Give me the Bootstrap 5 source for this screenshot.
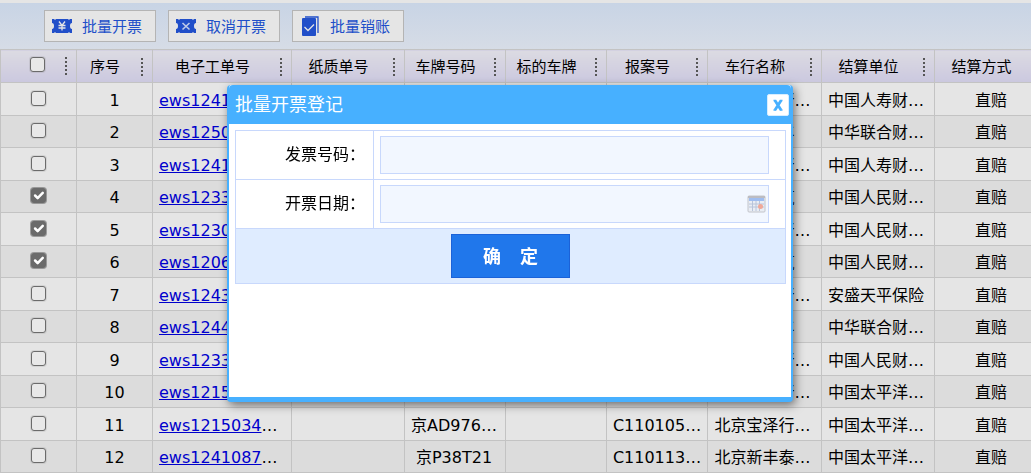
<!DOCTYPE html>
<html lang="zh-CN">
<head>
<meta charset="utf-8">
<meta name="viewport" content="width=device-width, initial-scale=1">
<title>批量开票登记</title>
<link href="https://cdn.jsdelivr.net/npm/bootstrap@5.3.0/dist/css/bootstrap.min.css" rel="stylesheet">
<style>
body { font-family: "DejaVu Sans", "Noto Sans CJK SC", sans-serif; font-size: 16px; color: #000; background: #e5e5e5; overflow: hidden; }
.toolbar { margin-top: 3px; height: 46px; padding: 7px 0 0 44px; gap: 12px; background: linear-gradient(#c8d4e5, #d6dce6); }
.tool-btn { width: 112px; height: 32px; padding: 0 0 0 7px; gap: 10px; font-size: 15px; line-height: 20px; color: #214fc9; background: #e5e5e5; border: 1px solid #b4b4b4; border-radius: 0; font-family: "Noto Sans CJK SC", sans-serif; }
.tool-btn svg { width: 20px; height: 20px; }
.grid { table-layout: fixed; width: 1048px; border-collapse: collapse; line-height: 20px; }
.grid th, .grid td { border: 1px solid #c3c3c3; padding: 0; text-align: center; white-space: nowrap; overflow: hidden; vertical-align: middle; }
.grid th { height: 33px; padding-top: 2px; font-size: 15px; font-weight: 400; background: linear-gradient(#dcdbe2, #cbc8df); }
.grid th:first-child { padding-top: 0; }
.grid td { height: 33px; padding-top: 3px; }
.grid tbody tr:nth-child(even) td { height: 32px; background: #dcdcdc; }
.grid td:nth-child(3) { text-align: left; padding-left: 6px; }
.grid td:nth-child(5) { padding-right: 2px; }
.grid td:nth-child(8), .grid td:nth-child(9) { padding-right: 4px; }
.grid td a { color: #00c; text-decoration: underline; }
.grip { width: 3px; height: 19px; margin-right: 9px; background: repeating-linear-gradient(#555 0 2px, transparent 2px 4px) center / 2px 18px no-repeat; }
.grip-room { width: 7px; }
.grid .form-check-input { width: 15px; height: 15px; margin: 0; border: 1px solid #6b6b6b; border-radius: 3px; background-color: #e8e8e8; vertical-align: middle; box-shadow: 0 0 0 1px rgba(107,107,107,.15); }
.grid td .form-check-input { margin-top: -6px; }
.grid th .form-check-input { margin-top: -4px; }
.grid .form-check-input:checked { background-color: #6b6b6b; border-color: #6b6b6b; background-size: 17px; background-position: center; box-shadow: 0 0 0 1px rgba(107,107,107,.6); }
.dialog-layer { padding: 85px 11px 0 0; overflow: hidden; }
.dialog-layer .modal-dialog { max-width: 566px; margin: 0 auto; }
.dialog-box { min-height: 317px; border: 2px solid #47b0ff; border-width: 0 2px 5px; border-radius: 4px; background: #fff; box-shadow: 2px 3px 10px rgba(0,0,0,.5); }
.dialog-head { height: 39px; padding: 1px 2px 0 6px; border: 0; background: #47b0ff; border-radius: 4px 4px 0 0; }
.dialog-head h1 { font-size: 18px; line-height: 24px; color: #fff; font-weight: 400; }
.x-btn { width: 22px; height: 22px; padding: 0; border: 1px solid #d6edff; border-radius: 2px; background: #fff; display: flex; }
.entry-wrap { padding: 6px 5px 0 6px; }
.entry { border-collapse: collapse; width: 100%; }
.entry th, .entry td { border: 1px solid #c8d8fc; padding: 5px 6px; }
.entry th { width: 138px; font-weight: 400; text-align: right; padding-right: 8px; }
.entry .act { height: 55px; background: #dfecff; text-align: center; }
.entry .form-control { width: 389px; max-width: 100%; height: 38px; border: 1px solid #c8d8fc; border-radius: 0; background-color: #f2f7ff; }
.date-box { width: 389px; max-width: 100%; }
.date-box svg { position: absolute; right: 3px; top: 10px; width: 19px; height: 18px; }
.ok-btn { width: 119px; height: 44px; padding: 0; border: 1px solid #1b62d8; border-radius: 0; background: #2077eb; color: #fff; font-size: 18px; font-weight: 700; }
</style>
</head>
<body>
<div class="toolbar d-flex align-items-start">
  <button type="button" class="tool-btn d-flex align-items-center">
    <svg viewBox="0 0 20 20" aria-hidden="true"><path fill="#214fc9" d="M0 3h2l1 1 1-1h12l1 1 1-1h2v4q-2 0-2 3t2 3v4h-2l-1-1-1 1H4l-1-1-1 1H0v-4q2 0 2-3T0 7z"/><path d="M7 5.500l3 4 3-4M6.500 9.500h7M6.500 12h7M10 9.500v5" fill="none" stroke="#e5e5e5" stroke-width="1.300"/></svg>批量开票</button>
  <button type="button" class="tool-btn d-flex align-items-center">
    <svg viewBox="0 0 20 20" aria-hidden="true"><path fill="#214fc9" d="M0 3h2l1 1 1-1h12l1 1 1-1h2v4q-2 0-2 3t2 3v4h-2l-1-1-1 1H4l-1-1-1 1H0v-4q2 0 2-3T0 7z"/><path d="M6.500 7l7 6.500M13.500 7l-7 6.500" fill="none" stroke="#c0cbe8" stroke-width="1.600"/></svg>取消开票</button>
  <button type="button" class="tool-btn d-flex align-items-center">
    <svg viewBox="0 0 20 20" aria-hidden="true"><path d="M5 1h13v16" fill="none" stroke="#214fc9" stroke-width="1.300"/><rect x="2" y="2" width="14" height="18" rx="1" fill="#214fc9"/><path d="M4.500 11l3.500 3.500 6-6" fill="none" stroke="#e5e5e5" stroke-width="1.300"/></svg>批量销账</button>
</div>
<div class="overflow-hidden">
<table class="grid">
<colgroup><col style="width:76px"><col style="width:76px"><col style="width:139px"><col style="width:113px"><col style="width:101px"><col style="width:101px"><col style="width:101px"><col style="width:114px"><col style="width:113px"><col style="width:113px"></colgroup>
<thead><tr>
<th><div class="d-flex align-items-center ps-3"><span class="flex-grow-1"><input type="checkbox" class="form-check-input" aria-label="全选"></span><i class="grip-room"></i><i class="grip"></i></div></th>
<th><div class="d-flex align-items-center"><span class="flex-grow-1">序号</span><i class="grip-room"></i><i class="grip"></i></div></th>
<th><div class="d-flex align-items-center"><span class="flex-grow-1">电子工单号</span><i class="grip-room"></i><i class="grip"></i></div></th>
<th><div class="d-flex align-items-center"><span class="flex-grow-1">纸质单号</span><i class="grip-room"></i><i class="grip"></i></div></th>
<th><div class="d-flex align-items-center"><span class="flex-grow-1">车牌号码</span><i class="grip-room"></i><i class="grip"></i></div></th>
<th><div class="d-flex align-items-center"><span class="flex-grow-1">标的车牌</span><i class="grip-room"></i><i class="grip"></i></div></th>
<th><div class="d-flex align-items-center"><span class="flex-grow-1">报案号</span><i class="grip-room"></i><i class="grip"></i></div></th>
<th><div class="d-flex align-items-center"><span class="flex-grow-1">车行名称</span><i class="grip-room"></i><i class="grip"></i></div></th>
<th><div class="d-flex align-items-center"><span class="flex-grow-1">结算单位</span><i class="grip-room"></i><i class="grip"></i></div></th>
<th><div class="d-flex align-items-center"><span class="flex-grow-1">结算方式</span><i class="grip-room"></i><i class="grip"></i></div></th>
</tr></thead>
<tbody>
<tr><td><input type="checkbox" class="form-check-input" aria-label="选择 1"></td><td>1</td><td><a href="#">ews1241</a></td><td></td><td></td><td></td><td></td><td>北京宝泽行…</td><td>中国人寿财…</td><td>直赔</td></tr>
<tr><td><input type="checkbox" class="form-check-input" aria-label="选择 2"></td><td>2</td><td><a href="#">ews1250</a></td><td></td><td></td><td></td><td></td><td>北京新丰</td><td>中华联合财…</td><td>直赔</td></tr>
<tr><td><input type="checkbox" class="form-check-input" aria-label="选择 3"></td><td>3</td><td><a href="#">ews1241</a></td><td></td><td></td><td></td><td></td><td>北京宝泽行…</td><td>中国人寿财…</td><td>直赔</td></tr>
<tr><td><input type="checkbox" class="form-check-input" aria-label="选择 4" checked></td><td>4</td><td><a href="#">ews1233</a></td><td></td><td></td><td></td><td></td><td>北京车汽</td><td>中国人民财…</td><td>直赔</td></tr>
<tr><td><input type="checkbox" class="form-check-input" aria-label="选择 5" checked></td><td>5</td><td><a href="#">ews1230</a></td><td></td><td></td><td></td><td></td><td>北京宝泽行…</td><td>中国人民财…</td><td>直赔</td></tr>
<tr><td><input type="checkbox" class="form-check-input" aria-label="选择 6" checked></td><td>6</td><td><a href="#">ews1206</a></td><td></td><td></td><td></td><td></td><td>北京车汽</td><td>中国人民财…</td><td>直赔</td></tr>
<tr><td><input type="checkbox" class="form-check-input" aria-label="选择 7"></td><td>7</td><td><a href="#">ews1243</a></td><td></td><td></td><td></td><td></td><td>北京宝泽行…</td><td>安盛天平保险</td><td>直赔</td></tr>
<tr><td><input type="checkbox" class="form-check-input" aria-label="选择 8"></td><td>8</td><td><a href="#">ews1244</a></td><td></td><td></td><td></td><td></td><td>北京新丰</td><td>中华联合财…</td><td>直赔</td></tr>
<tr><td><input type="checkbox" class="form-check-input" aria-label="选择 9"></td><td>9</td><td><a href="#">ews1233</a></td><td></td><td></td><td></td><td></td><td>北京宝泽行…</td><td>中国人民财…</td><td>直赔</td></tr>
<tr><td><input type="checkbox" class="form-check-input" aria-label="选择 10"></td><td>10</td><td><a href="#">ews1215</a></td><td></td><td></td><td></td><td></td><td>北京宝泽行…</td><td>中国太平洋…</td><td>直赔</td></tr>
<tr><td><input type="checkbox" class="form-check-input" aria-label="选择 11"></td><td>11</td><td><a href="#">ews1215034</a>…</td><td></td><td>京AD976…</td><td></td><td>C110105…</td><td>北京宝泽行…</td><td>中国太平洋…</td><td>直赔</td></tr>
<tr><td><input type="checkbox" class="form-check-input" aria-label="选择 12"></td><td>12</td><td><a href="#">ews1241087</a>…</td><td></td><td>京P38T21</td><td></td><td>C110113…</td><td>北京新丰泰…</td><td>中国太平洋…</td><td>直赔</td></tr>
</tbody>
</table>
</div>

<div class="modal d-block dialog-layer" role="dialog" aria-labelledby="dlgTitle">
  <div class="modal-dialog">
    <div class="modal-content dialog-box">
      <div class="modal-header dialog-head">
        <h1 class="m-0" id="dlgTitle">批量开票登记</h1>
        <button type="button" class="x-btn" aria-label="关闭"><svg viewBox="0 0 20 20" width="20" height="20"><path d="M5.500 5.500h2.500M12 5.500h2.500M5.500 15h2.500M12 15h2.500" stroke="#47b0ff" stroke-width="1.500"/><path d="M7 5.500l6 9.500M13 5.500L7 15" fill="none" stroke="#47b0ff" stroke-width="2.800"/></svg></button>
      </div>
      <form class="modal-body p-0">
        <div class="entry-wrap">
        <table class="entry">
          <tr><th><label for="invNo">发票号码：</label></th><td><input id="invNo" type="text" class="form-control"></td></tr>
          <tr><th><label for="invDate">开票日期：</label></th><td><div class="date-box position-relative"><input id="invDate" type="text" class="form-control">
            <svg viewBox="0 0 19 18" aria-hidden="true"><rect x="1" y="1" width="17" height="16" rx="1" fill="#e9edf4" stroke="#c2c4ca"/><path fill="#bcbcc2" d="M1 1h17v2H1z"/><path fill="#9fbdf0" d="M2 3h15v3H2z"/><path d="M2 9h15M2 12h15M5.500 6v10M9 6v10M12.500 6v10" stroke="#b8c4da"/><circle cx="13.500" cy="11.500" r="2.500" fill="#f0a898"/></svg></div></td></tr>
          <tr><td colspan="2" class="act"><button type="button" class="ok-btn">确&nbsp;&nbsp;&nbsp;定</button></td></tr>
        </table>
        </div>
      </form>
    </div>
  </div>
</div>
<script src="https://cdn.jsdelivr.net/npm/bootstrap@5.3.0/dist/js/bootstrap.bundle.min.js"></script>
</body>
</html>
